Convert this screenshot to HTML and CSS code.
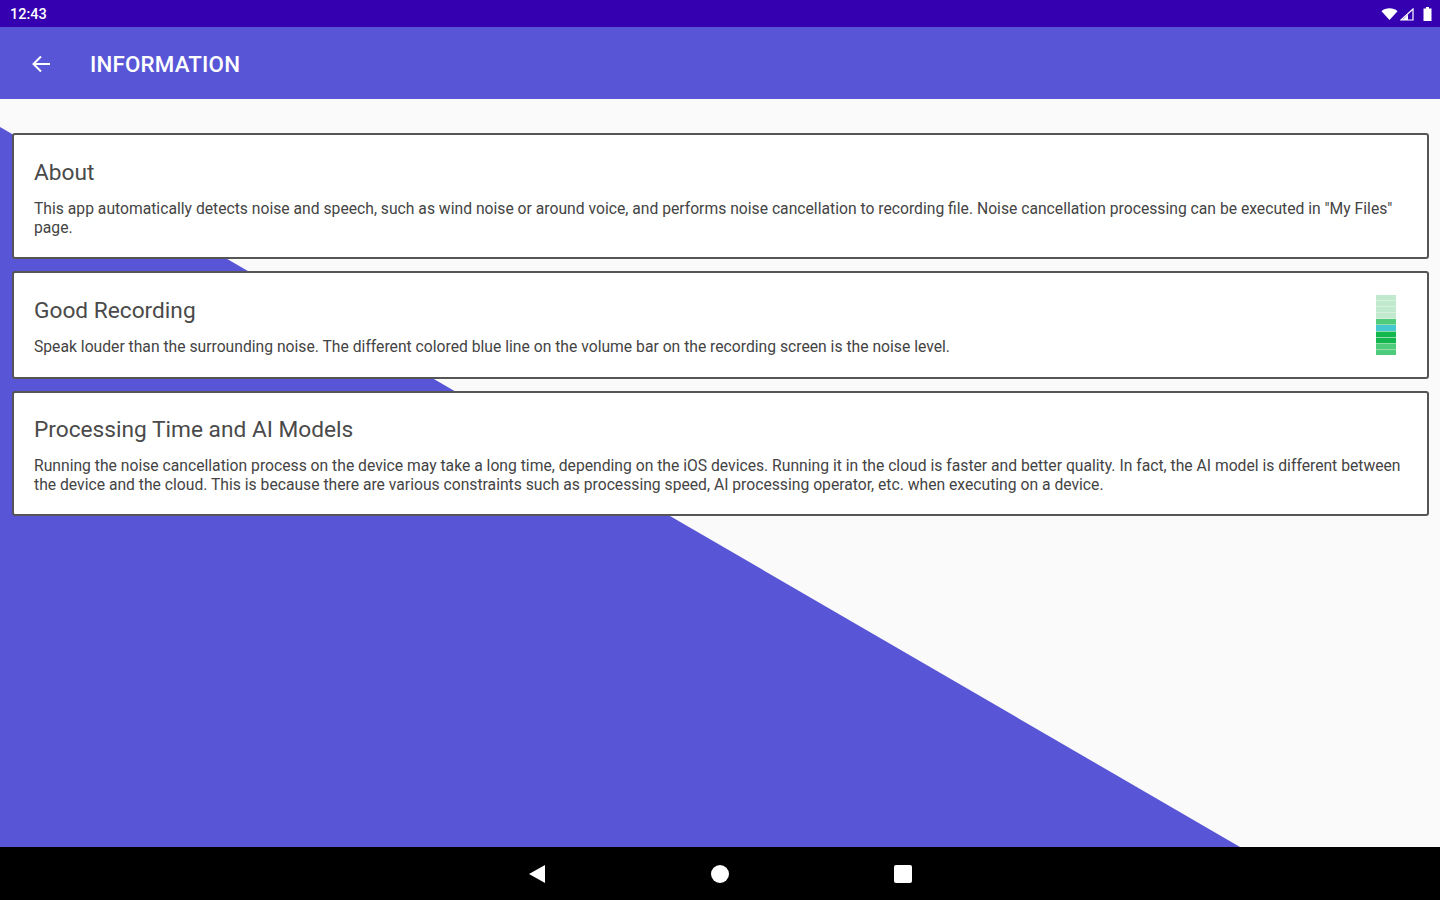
FILE: index.html
```html
<!DOCTYPE html>
<html lang="en">
<head>
    <meta charset="UTF-8">
    <title>Information</title>
    <link rel="stylesheet" href="styles.css">
</head>
<body>

<div class="status-bar">
    <span class="time">12:43</span>
    <div class="status-icons">
        <svg width="17" height="12" viewBox="0 0 16 12"><path d="M0 3.2 C4 -0.6 12 -0.6 16 3.2 L8 12 Z" fill="#fff"/></svg>
        <svg class="signal" width="14" height="13" viewBox="0 0 14 13"><path d="M13 1 V12 H1 Z" fill="none" stroke="#fff" stroke-width="1.2"/><path d="M8 12 V6.5 L2.500 12 Z" fill="#fff"/></svg>
        <svg width="9" height="14" viewBox="0 0 9 14"><path d="M3 0 H6 V1.500 H8.500 V14 H0.500 V1.500 H3 Z" fill="#fff"/></svg>
    </div>
</div>

<header class="toolbar">
    <svg class="back" width="22" height="22" viewBox="0 0 22 22"><path d="M20 11 H4 M11 3.500 L3.500 11 L11 18.500" fill="none" stroke="#fff" stroke-width="2"/></svg>
    <h1>INFORMATION</h1>
</header>

<main class="content">
    <section class="card card-about">
        <h2>About</h2>
        <p>This app automatically detects noise and speech, such as wind noise or around voice, and performs noise cancellation to recording file. Noise cancellation processing can be executed in "My Files" page.</p>
    </section>

    <section class="card card-recording">
        <div class="card-text">
            <h2>Good Recording</h2>
            <p>Speak louder than the surrounding noise. The different colored blue line on the volume bar on the recording screen is the noise level.</p>
        </div>
        <div class="volume-bar">
            <i class="pale"></i><i class="pale"></i><i class="pale"></i><i class="pale"></i>
            <i class="green"></i><i class="blue"></i><i class="strong"></i><i class="strong"></i><i class="green"></i><i class="green"></i>
        </div>
    </section>

    <section class="card card-models">
        <h2>Processing Time and AI Models</h2>
        <p>Running the noise cancellation process on the device may take a long time, depending on the iOS devices. Running it in the cloud is faster and better quality. In fact, the AI model is different between the device and the cloud. This is because there are various constraints such as processing speed, AI processing operator, etc. when executing on a device.</p>
    </section>
</main>

<nav class="nav-bar">
    <svg width="18" height="20" viewBox="0 0 18 20"><path d="M17 1 V19 L1 10 Z" fill="#fff"/></svg>
    <span class="nav-home"></span>
    <span class="nav-recent"></span>
</nav>

</body>
</html>
```

FILE: styles.css
```css
* {
    box-sizing: border-box;
}

body {
    margin: 0;
    width: 1440px;
    height: 900px;
    overflow: hidden;
    display: flex;
    flex-direction: column;
    font-family: Roboto, 'Liberation Sans', sans-serif;
    background: #fafafa;
}

.status-bar {
    height: 27px;
    flex: none;
    background: #3400b0;
    color: #fff;
    display: flex;
    justify-content: space-between;
    align-items: center;
    padding: 1px 8px 0 10px;
}

.time {
    font-size: 14.5px;
    font-weight: 500;
}

.status-icons {
    display: flex;
    align-items: center;
    gap: 2px;
}

.status-icons .signal {
    margin-right: 7px;
}

.toolbar {
    height: 72px;
    flex: none;
    background: #5856d6;
    color: #fff;
    display: flex;
    align-items: center;
    padding: 2px 0 0 30px;
    position: relative;
    z-index: 1;
}

.back {
    margin-right: 38px;
}

.toolbar h1 {
    margin: 0;
    font-size: 22.300px;
    font-weight: 500;
    letter-spacing: 0.2px;
}

/* diagonal runs from the left edge down to x=1240 at the bottom */
.content {
    flex: 1;
    position: relative;
    padding: 34px 11px 0 12px;
    display: flex;
    flex-direction: column;
    gap: 12px;
}

.content::before {
    content: "";
    position: absolute;
    top: 0;
    left: 0;
    right: 0;
    bottom: 0;
    background: #5856d6;
    clip-path: polygon(0 28px, 1240px 100%, 0 100%);
}

.card {
    position: relative;
    background: #fff;
    border: 2px solid #555;
    border-radius: 3px;
    padding: 25px 20px 0;
    color: #444;
}

.card-about {
    height: 126px;
}

.card-recording {
    height: 108px;
    display: flex;
    justify-content: space-between;
}

.card-models {
    height: 125px;
    padding-top: 24px;
}

.card h2 {
    margin: 0 0 14px;
    font-size: 22.700px;
    line-height: 26px;
    font-weight: 400;
    color: #4a4a4a;
}

.card p {
    margin: 0;
    font-size: 15.700px;
    line-height: 18.500px;
    color: #444;
}

.volume-bar {
    width: 20px;
    height: 60px;
    margin-top: -3px;
    margin-right: 11px;
    display: flex;
    flex-direction: column;
    gap: 1px;
    background: linear-gradient(#d5f1de 40%, #8fdda9 40%);
}

.volume-bar i {
    flex: 1;
    display: block;
}

.volume-bar .pale { background: #c0e9cd; }
.volume-bar .green { background: #4fcb7c; }
.volume-bar .blue { background: #46c8d0; }
.volume-bar .strong { background: #12b84e; }

.nav-bar {
    height: 53px;
    flex: none;
    background: #000;
    position: relative;
    z-index: 1;
    display: flex;
    justify-content: center;
    align-items: center;
    gap: 165px;
}

.nav-home {
    width: 18px;
    height: 18px;
    border-radius: 50%;
    background: #fff;
}

.nav-recent {
    width: 18px;
    height: 18px;
    border-radius: 2px;
    background: #fff;
}
```
